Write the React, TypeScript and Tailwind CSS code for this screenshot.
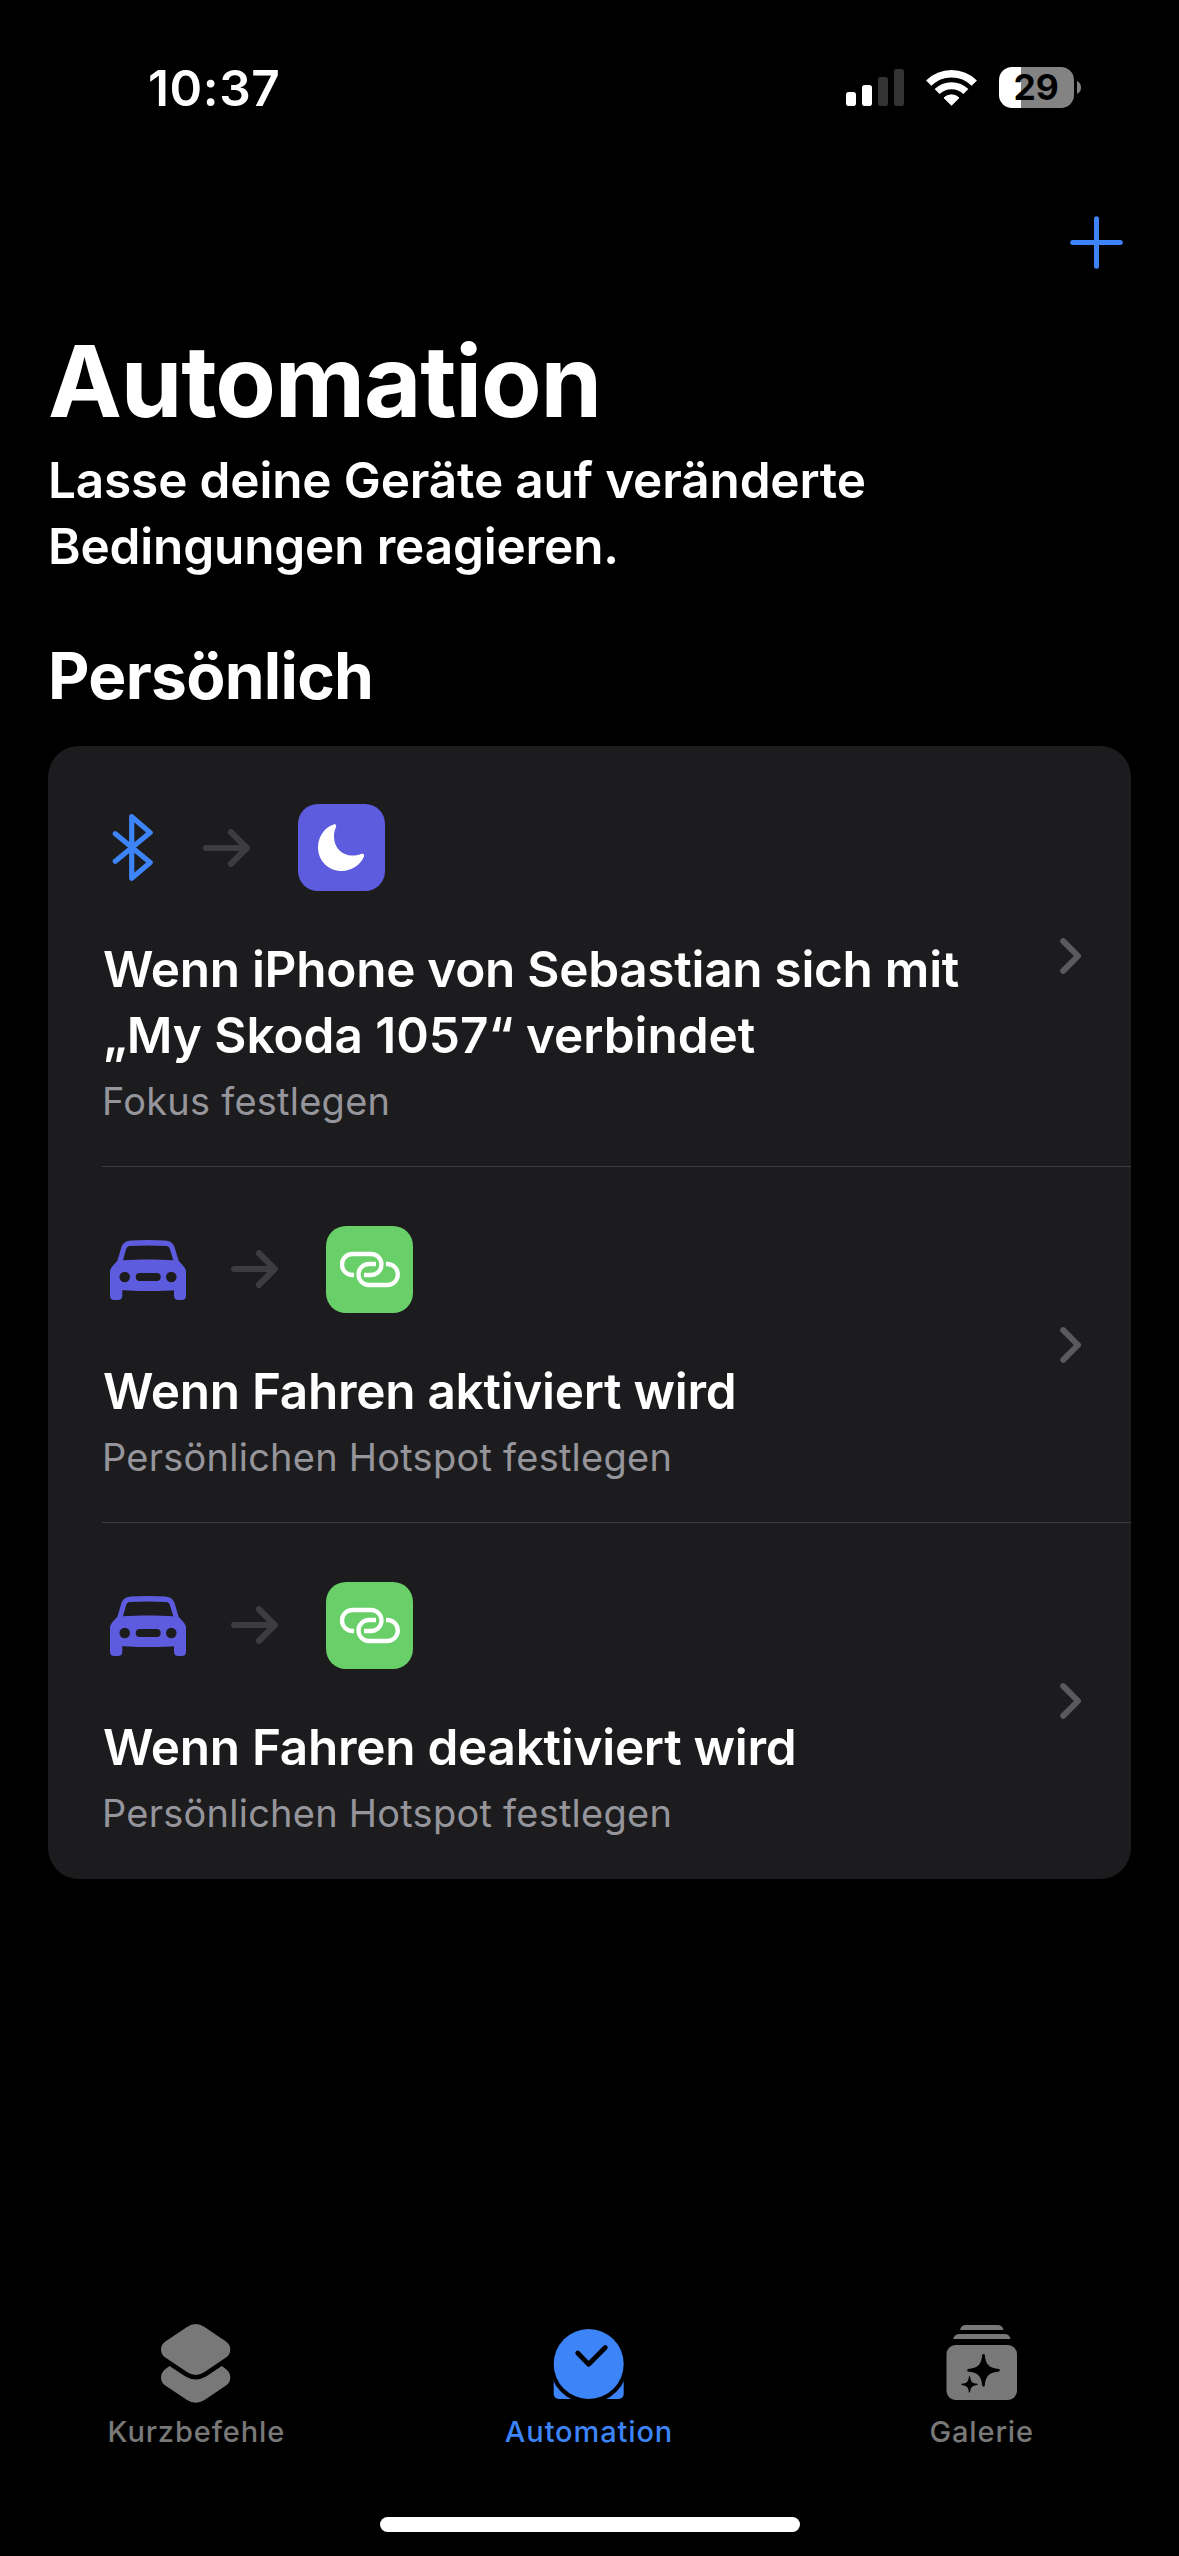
import React from 'react';

function SignalIcon() {
  return (
    <svg width="58" height="37" viewBox="0 0 58 37">
      <rect x="0" y="23" width="10" height="14" rx="2.8" fill="#fff" />
      <rect x="16" y="16" width="10" height="21" rx="2.8" fill="#fff" />
      <rect x="32" y="8" width="10" height="29" rx="2.8" fill="#333" />
      <rect x="48" y="0" width="10" height="37" rx="2.8" fill="#333" />
    </svg>
  );
}

function WifiIcon() {
  return (
    <svg width="51" height="37" viewBox="0 0 51 37" fill="none" stroke="#fff">
      <path d="M2.7 14.2A32.3 32.3 0 0 1 48.3 14.2" strokeWidth="7.4" />
      <path d="M11.1 22.6A20.4 20.4 0 0 1 39.9 22.6" strokeWidth="7" />
      <path
        d="M18 28.8A11 11 0 0 1 33 28.8L25.5 36.2Z"
        fill="#fff"
        strokeWidth="1"
        strokeLinejoin="round"
      />
    </svg>
  );
}

function Battery() {
  return (
    <div className="flex items-center gap-[3px]">
      <div className="flex h-[41px] w-[75px] items-center justify-center rounded-[13px] bg-[linear-gradient(to_right,#fff_22px,#838383_22px)] pr-px text-[35.5px] leading-[41px] font-bold tracking-[-0.3px] text-black">
        29
      </div>
      <svg width="4" height="13" viewBox="0 0 4 13">
        <path d="M0 0Q4 2 4 6.5Q4 11 0 13Z" fill="#838383" />
      </svg>
    </div>
  );
}

function BluetoothIcon() {
  return (
    <svg width="56" height="87" viewBox="0 0 56 87" fill="none">
      <path
        d="M13.3 29.7L48.2 58.5L29.7 74.3V12.7L48.2 28.6L13.3 57.3"
        stroke="#3c84f7"
        strokeWidth="5.2"
        strokeLinecap="round"
        strokeLinejoin="round"
      />
    </svg>
  );
}

function CarIcon() {
  return (
    <svg width="84" height="87" viewBox="0 0 84 87" className="overflow-visible">
      <path
        fill="#5e5cde"
        fillRule="evenodd"
        d="M8 46C8 42 11 39.500 15.300 35L19 22.500C20.500 17 23.500 15 29 14.500C40 13.800 52 13.800 63 14.500C68.500 15 71.500 17 73 22.500L76.700 35C81 39.500 84 42 84 46V69.500Q84 74 79.500 74H76.500Q72 74 72 69.500V64.200C60 65.200 32 65.200 20.300 64.200V69.500Q20.300 74 15.800 74H12.500Q8 74 8 69.500ZM21 34.300L24 23.500C24.700 21 25.800 20.200 28 20C40 19.300 52 19.300 64 20C66.400 20.200 67.400 21 68 23.500L71.300 34.300C56 33.300 36 33.300 21 34.300ZM17.400 51A5.300 5.300 0 1 0 28 51A5.300 5.300 0 1 0 17.400 51ZM64 51A5.300 5.300 0 1 0 74.600 51A5.300 5.300 0 1 0 64 51ZM37.700 47A4 4 0 0 0 37.700 55H54.700A4 4 0 0 0 54.700 47Z"
      />
    </svg>
  );
}

function ArrowIcon() {
  return (
    <svg width="47" height="38" viewBox="0 0 47 38" fill="none">
      <path
        d="M3.200 19H43.500M28 3.200L43.700 19L28 34.800"
        stroke="#3d3d40"
        strokeWidth="6.200"
        strokeLinecap="round"
        strokeLinejoin="round"
      />
    </svg>
  );
}

function FocusTile() {
  return (
    <div className="size-[87px] rounded-[20px] bg-[#5e5cde]">
      <svg width="87" height="87" viewBox="0 0 87 87">
        <path
          fill="#fff"
          d="M35.500 20.500C38 19.600 38.800 21.200 37.800 23.400C36.300 27 36 29 36 33C36 43.500 44 51.500 54 51.500C57.500 51.500 60 51 62.500 50.200C65.200 49.300 66.800 50.200 66 52.600C62.500 61 54 67 43.700 67C30.500 67 20 56.500 20 43.500C20 33 26 24 35.500 20.500Z"
        />
      </svg>
    </div>
  );
}

function HotspotTile() {
  return (
    <div className="size-[87px] rounded-[20px] bg-[#68cf69]">
      <svg width="87" height="87" viewBox="0 0 87 87" fill="none" stroke="#fff" strokeWidth="4.300">
        <path d="M28 49H26.500A10.500 10.500 0 0 1 26.500 28H45A10.500 10.500 0 0 1 45 49H38" />
        <path d="M50 38H43A10.500 10.500 0 0 0 43 59H61.300A10.500 10.500 0 0 0 61.300 38H60" />
      </svg>
    </div>
  );
}

function Chevron() {
  return (
    <svg width="21" height="36" viewBox="0 0 21 36" fill="none" className="shrink-0">
      <path
        d="M3.200 3.200L18 18L3.200 32.800"
        stroke="#5a5a5e"
        strokeWidth="6"
        strokeLinecap="round"
        strokeLinejoin="round"
      />
    </svg>
  );
}

function ShortcutsIcon() {
  return (
    <svg width="80" height="80" viewBox="0 0 80 80" fill="#787878">
      <path d="M31 3Q39.700 -2.800 48.500 3L70 17.500Q74.300 20.500 74.300 25.500Q74.300 30.500 70 33.500L48.500 48Q39.700 54 31 48L9.300 33.500Q5 30.500 5 25.500Q5 20.500 9.300 17.500Z" />
      <path d="M13.500 42L29.500 52.600Q39.700 58.500 50 52.600L65.800 42L69.800 45Q74.300 48.500 74.300 53.500Q74.300 58.500 70 61.500L48.500 76Q39.700 81.500 31 76L9.300 61.500Q5 58.500 5 53.500Q5 48.500 9.500 45Z" />
    </svg>
  );
}

function ClockIcon() {
  return (
    <svg width="80" height="80" viewBox="0 0 80 80">
      <rect x="4.700" y="50" width="70" height="25" rx="5" fill="#3c84f7" />
      <circle cx="39.700" cy="40" r="39.200" fill="#000" />
      <circle cx="39.700" cy="40" r="35" fill="#3c84f7" />
      <path
        d="M28.700 29L39.700 40.300L56.300 23.500"
        fill="none"
        stroke="#000"
        strokeWidth="4.800"
        strokeLinecap="round"
        strokeLinejoin="round"
      />
    </svg>
  );
}

const SPARKLE =
  'M-1.200 -15.800Q0 -16.800 1.200 -15.800C2.200 -5.500 5.500 -2.200 15.800 -1.200Q16.800 0 15.800 1.200C5.500 2.200 2.200 5.500 1.200 15.800Q0 16.800 -1.200 15.800C-2.200 5.500 -5.500 2.200 -15.800 1.200Q-16.800 0 -15.800 -1.200C-5.500 -2.200 -2.200 -5.500 -1.200 -15.800Z';

function GalleryIcon() {
  return (
    <svg width="80" height="80" viewBox="0 0 80 80" fill="#787878">
      <path d="M18 6Q19 1 24 1H55.500Q60.500 1 61.500 6Z" />
      <path d="M11.200 15Q12.500 10 17.500 10H62.500Q67.500 10 68.500 15Z" />
      <rect x="4.500" y="21" width="70.500" height="55" rx="9" />
      <path d={SPARKLE} fill="#000" transform="translate(41.500 46.300)" />
      <path d={SPARKLE} fill="#000" transform="translate(27.500 60.300) scale(.5)" />
    </svg>
  );
}

type RowProps = {
  trigger: React.ReactNode;
  action: React.ReactNode;
  title: React.ReactNode;
  subtitle: string;
  height: string;
};

function Row({ trigger, action, title, subtitle, height }: RowProps) {
  return (
    <div className={`flex items-center justify-between pr-[50px] pl-[54px] ${height}`}>
      <div className="pt-4">
        <div className="flex h-[87px] items-center">
          {trigger}
          <div className="mr-12 ml-[45px]">
            <ArrowIcon />
          </div>
          {action}
        </div>
        <div className="mt-[45px] pl-px text-[49.5px] leading-[66px] font-semibold tracking-[-0.28px] whitespace-nowrap">
          {title}
        </div>
        <div className="mt-2.5 text-[38px] leading-[46px] tracking-[0.24px] whitespace-nowrap text-[#95959b]">
          {subtitle}
        </div>
      </div>
      <Chevron />
    </div>
  );
}

function Separator() {
  return <div className="ml-[54px] h-px bg-[#3d3d41]" />;
}

function Tab({ icon, label, color }: { icon: React.ReactNode; label: string; color: string }) {
  return (
    <div className={`flex flex-1 flex-col items-center ${color}`}>
      {icon}
      <div className="mt-2.5 text-[29px] leading-9 font-medium tracking-[0.88px]">{label}</div>
    </div>
  );
}

export default function App() {
  return (
    <div className="flex h-[2556px] w-[1179px] flex-col overflow-hidden bg-black font-['Inter',sans-serif] text-white">
      <header className="flex h-[140px] shrink-0 items-start justify-between pr-[98px] pl-[148px]">
        <div className="mt-[58px] text-[49.5px] leading-[60px] font-semibold tracking-[0.6px]">10:37</div>
        <div className="mt-[67px] flex h-[41px] items-center gap-[22px]">
          <SignalIcon />
          <WifiIcon />
          <Battery />
        </div>
      </header>

      <div className="flex h-[181px] shrink-0 justify-end pt-[76px] pr-14">
        <svg width="53" height="53" viewBox="0 0 53 53">
          <path d="M2.700 26.500H50.300M26.500 2.700V50.300" stroke="#3c84f7" strokeWidth="5" strokeLinecap="round" />
        </svg>
      </div>

      <main className="flex flex-1 flex-col px-12">
        <h1 className="text-[99px] leading-[120px] font-bold tracking-[-1.19px]">Automation</h1>
        <p className="mt-1.5 text-[49.5px] leading-[66px] font-semibold tracking-[-0.16px]">
          Lasse deine Geräte auf veränderte
          <br />
          Bedingungen reagieren.
        </p>
        <h2 className="mt-[58px] text-[64px] leading-[78px] font-bold tracking-[-0.7px]">Persönlich</h2>

        <section className="mt-[31px] h-[1133px] w-[1083px] rounded-[31px] bg-[#1c1c1e]">
          <Row
            trigger={<BluetoothIcon />}
            action={<FocusTile />}
            title={
              <>
                Wenn iPhone von Sebastian sich mit
                <br />
                <span className="tracking-[-0.03px]">„My Skoda 1057“ verbindet</span>
              </>
            }
            subtitle="Fokus festlegen"
            height="h-[420px]"
          />
          <Separator />
          <Row
            trigger={<CarIcon />}
            action={<HotspotTile />}
            title="Wenn Fahren aktiviert wird"
            subtitle="Persönlichen Hotspot festlegen"
            height="h-[355px]"
          />
          <Separator />
          <Row
            trigger={<CarIcon />}
            action={<HotspotTile />}
            title="Wenn Fahren deaktiviert wird"
            subtitle="Persönlichen Hotspot festlegen"
            height="h-[355px]"
          />
        </section>
      </main>

      <nav className="flex h-[193px] shrink-0 pr-px">
        <Tab icon={<ShortcutsIcon />} label="Kurzbefehle" color="text-[#787878]" />
        <Tab icon={<ClockIcon />} label="Automation" color="text-[#3c84f7]" />
        <Tab icon={<GalleryIcon />} label="Galerie" color="text-[#787878]" />
      </nav>
      <div className="mb-6 ml-[380px] h-[15px] w-[420px] shrink-0 rounded-full bg-white" />
    </div>
  );
}
